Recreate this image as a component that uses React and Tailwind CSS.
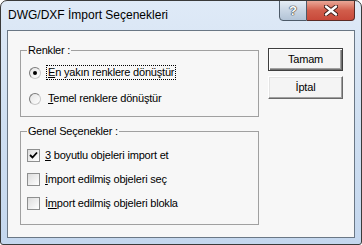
import React from "react";

const font = { fontFamily: '"Liberation Sans", Arial, sans-serif' };

const Radio = ({ checked }) => (
  <div className="w-[12px] h-[12px] rounded-full border border-t-[#7a7a7a] border-l-[#7a7a7a] border-r-[#c8c8c8] border-b-[#c8c8c8] bg-gradient-to-br from-[#e4e4e4] to-white flex items-center justify-center shrink-0">
    {checked && <div className="w-[4px] h-[4px] rounded-full bg-black" />}
  </div>
);

const Checkbox = ({ checked }) => (
  <div className="w-[13px] h-[13px] border border-[#8e8f8f] bg-gradient-to-br from-[#dcdcdc] to-white flex items-center justify-center shrink-0">
    {checked && (
      <svg width="9" height="9" viewBox="0 0 9 9">
        <path d="M1 4 L3.5 6.5 L8 1.5" stroke="#000" strokeWidth="1.8" fill="none" />
      </svg>
    )}
  </div>
);

const GroupBox = ({ title, className, children }) => (
  <fieldset className={`border border-[#a0a0a0] ${className}`}>
    <legend className="ml-[6px] px-[1px] text-[11px] leading-[13px] tracking-[-0.2px]">
      {title}
    </legend>
    {children}
  </fieldset>
);

export default function App() {
  return (
    <div
      style={font}
      className="w-[362px] h-[245px] flex flex-col border border-[#3a3a3a] rounded-t-[7px] rounded-b-[3px] overflow-hidden bg-gradient-to-b from-[#dfeaf7] via-[#cfdff1] to-[#c4d7ee] text-black"
    >
      {/* title bar */}
      <div className="h-[29px] flex justify-between shrink-0">
        <div className="pl-[7px] pt-[7px] text-[12px] leading-[15px]">
          DWG/DXF İmport Seçenekleri
        </div>
        <div className="flex items-start -mt-px mr-[6px]">
          <div className="w-[28px] h-[21px] border border-[#4d5a68] rounded-bl-[4px] bg-gradient-to-b from-[#e6edf5] via-[#c9d6e4] to-[#b3c4d7] flex items-center justify-center">
            <span
              className="text-[13px] font-bold text-white leading-none"
              style={{ textShadow: "0 0 1px #333, 0 0 1px #333, 0 0 1px #333" }}
            >
              ?
            </span>
          </div>
          <div className="w-[48px] h-[21px] border border-l-0 border-[#5a2a25] rounded-br-[4px] bg-gradient-to-b from-[#e9a797] via-[#d15d4b] to-[#c8493a] flex items-center justify-center">
            <svg width="14" height="11" viewBox="0 0 14 11">
              <path
                d="M2 1.5 L12 9.5 M12 1.5 L2 9.5"
                stroke="#3a1a16"
                strokeWidth="4.2"
                strokeLinecap="round"
              />
              <path
                d="M2 1.5 L12 9.5 M12 1.5 L2 9.5"
                stroke="#fff"
                strokeWidth="2.4"
                strokeLinecap="round"
              />
            </svg>
          </div>
        </div>
      </div>

      {/* client area */}
      <div className="mx-[6px] h-[208px] border border-[#6a7785] bg-[#f7f7f7] pl-[12px] pt-[13px] flex gap-[9px]">
        <div className="w-[239px] flex flex-col">
          <GroupBox title="Renkler :" className="h-[73px]">
            <div className="flex flex-col gap-[9px] pt-[7px] pl-[8px]">
              <div className="h-[17px] flex items-center gap-[5px]">
                <Radio checked />
                <span className="text-[11px] leading-[13px] tracking-[-0.2px] border border-dotted border-black px-[1px]">
                  <span className="underline">E</span>n yakın renklere dönüştür
                </span>
              </div>
              <div className="h-[17px] flex items-center gap-[6px]">
                <Radio />
                <span className="text-[11px] leading-[13px] tracking-[-0.2px] px-[1px]">
                  <span className="underline">T</span>emel renklere dönüştür
                </span>
              </div>
            </div>
          </GroupBox>
          <GroupBox title="Genel Seçenekler :" className="h-[100px] mt-[8px]">
            <div className="flex flex-col gap-[8px] pt-[9px] pl-[6px]">
              <div className="h-[16px] flex items-center gap-[5px]">
                <Checkbox checked />
                <span className="text-[11px] leading-[13px] tracking-[-0.2px]">
                  <span className="underline">3</span> boyutlu objeleri import et
                </span>
              </div>
              <div className="h-[16px] flex items-center gap-[5px]">
                <Checkbox />
                <span className="text-[11px] leading-[13px] tracking-[-0.2px]">
                  <span className="underline">İ</span>mport edilmiş objeleri seç
                </span>
              </div>
              <div className="h-[16px] flex items-center gap-[5px]">
                <Checkbox />
                <span className="text-[11px] leading-[13px] tracking-[-0.2px]">
                  İ<span className="underline">m</span>port edilmiş objeleri blokla
                </span>
              </div>
            </div>
          </GroupBox>
        </div>

        <div className="w-[75px] pt-[4px] flex flex-col gap-[5px]">
          <button className="h-[23px] border border-[#3f3f3f] bg-[#f4f4f4] text-[11px] tracking-[-0.2px] shadow-[inset_1px_1px_0_#fff,inset_-1px_-1px_0_#707070,inset_-2px_-2px_0_#a0a0a0]">
            Tamam
          </button>
          <button className="h-[23px] border border-t-white border-l-white border-r-[#696969] border-b-[#696969] bg-[#f4f4f4] text-[11px] tracking-[-0.2px] shadow-[inset_-1px_-1px_0_#a0a0a0,inset_1px_1px_0_#e3e3e3]">
            İptal
          </button>
        </div>
      </div>
    </div>
  );
}
